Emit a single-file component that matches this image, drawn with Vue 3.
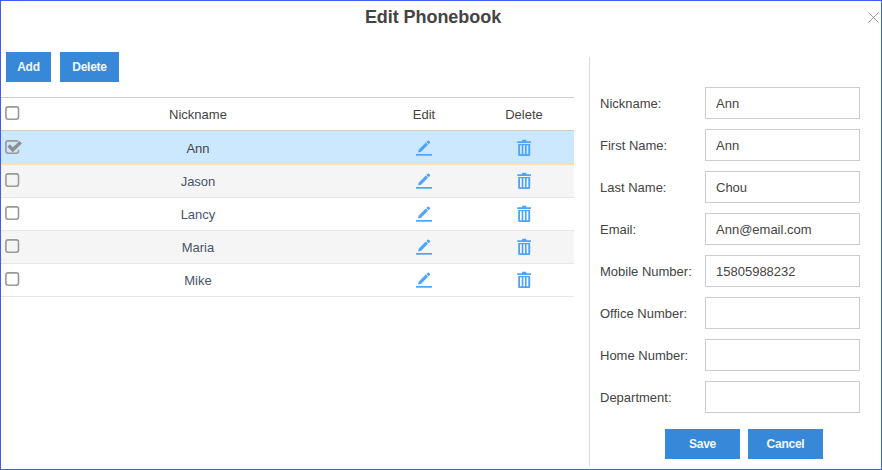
<script setup>
import { ref } from 'vue'

const contacts = ref([
  { name: 'Ann', checked: true },
  { name: 'Jason', checked: false },
  { name: 'Lancy', checked: false },
  { name: 'Maria', checked: false },
  { name: 'Mike', checked: false },
])

const fields = ref([
  { label: 'Nickname:', value: 'Ann' },
  { label: 'First Name:', value: 'Ann' },
  { label: 'Last Name:', value: 'Chou' },
  { label: 'Email:', value: 'Ann@email.com' },
  { label: 'Mobile Number:', value: '15805988232' },
  { label: 'Office Number:', value: '' },
  { label: 'Home Number:', value: '' },
  { label: 'Department:', value: '' },
])
</script>

<template>
  <div class="dialog">
    <header class="head">
      <h1>Edit Phonebook</h1>
      <svg class="close" width="11" height="11" viewBox="0 0 11 11">
        <path d="M0.5 0.5L10.5 10.5M10.5 0.5L0.5 10.5" />
      </svg>
    </header>
    <div class="body">
      <section class="list">
        <div class="tools">
          <button class="btn add">Add</button>
          <button class="btn del">Delete</button>
        </div>
        <div class="table">
          <div class="row header">
            <span class="check">
              <svg width="18" height="16" viewBox="0 0 18 16">
                <rect class="box" x="0.9" y="1.9" width="12.6" height="12.4" rx="2.2" />
              </svg>
            </span>
            <span>Nickname</span>
            <span>Edit</span>
            <span>Delete</span>
          </div>
          <div v-for="c in contacts" :key="c.name" class="row" :class="{ selected: c.checked }">
            <span class="check">
              <svg width="18" height="16" viewBox="0 0 18 16">
                <template v-if="c.checked">
                  <path class="box" d="M13 2.2Q12.4 1.9 11.4 1.9H3.1Q0.9 1.9 0.9 4.1V12.1Q0.9 14.3 3.1 14.3H11.3Q13.5 14.3 13.5 12.1V10.8" />
                  <path class="tick" d="M3.6 6.6L7.8 10.8L15.7 3.2" />
                </template>
                <rect v-else class="box" x="0.9" y="1.9" width="12.6" height="12.4" rx="2.2" />
              </svg>
            </span>
            <span class="name">{{ c.name }}</span>
            <span>
              <svg class="icon" width="16" height="18" viewBox="0 0 16 18">
                <rect x="0" y="15" width="16" height="1.7" />
                <path d="M2 13.6L2.9 10.5L9.8 3.6L12 5.8L5.1 12.7Z" />
                <path d="M10.4 3L11.7 1.7Q12.3 1.1 12.9 1.7L13.9 2.7Q14.5 3.3 13.9 3.9L12.6 5.2Z" />
              </svg>
            </span>
            <span>
              <svg class="icon" width="14" height="18" viewBox="0 0 14 18">
                <path d="M0.3 2.3H5V1.5Q5 0.7 5.8 0.7H8.7Q9.5 0.7 9.5 1.5V2.3H14V4.1H0.3Z" />
                <path fill-rule="evenodd" d="M1.2 5H13.2V16Q13.2 17 12.2 17H2.2Q1.2 17 1.2 16ZM3 6.3V15.2H4.7V6.3ZM6.3 6.3V15.2H8V6.3ZM9.6 6.3V15.2H11.3V6.3Z" />
              </svg>
            </span>
          </div>
        </div>
      </section>
      <form class="details" @submit.prevent>
        <label v-for="f in fields" :key="f.label" class="field">
          <span>{{ f.label }}</span>
          <input v-model="f.value" type="text" />
        </label>
        <div class="actions">
          <button class="btn wide">Save</button>
          <button class="btn wide">Cancel</button>
        </div>
      </form>
    </div>
  </div>
</template>

<style>
body {
  margin: 0;
  background: #fff;
}
</style>

<style scoped>
.dialog {
  box-sizing: border-box;
  width: 882px;
  height: 470px;
  border: 1px solid #405cf5;
  background: #fff;
  color: #444;
  font: 13px/16px "Liberation Sans", Arial, sans-serif;
  overflow: hidden;
}
.head {
  display: flex;
  height: 51px;
  padding: 0 2px 0 0;
}
h1 {
  flex: 1;
  margin: 5px 0 0;
  padding-right: 3px;
  font-size: 18px;
  line-height: 22px;
  letter-spacing: -0.06px;
  text-align: center;
}
.close {
  margin-top: 11px;
  fill: none;
  stroke: #999;
  stroke-width: 1;
}
.body {
  display: flex;
}
.list {
  width: 573px;
  margin-right: 15px;
}
.tools {
  display: flex;
  gap: 9px;
  padding-left: 5px;
  height: 45px;
}
.btn {
  height: 30px;
  padding: 0;
  border: 0;
  border-radius: 0;
  background: #3788d8;
  color: #f2f7fc;
  font: bold 12px/30px "Liberation Sans", Arial, sans-serif;
  letter-spacing: -0.25px;
}
.add {
  width: 45px;
}
.del {
  width: 59px;
}
.wide {
  width: 75px;
}
.row {
  box-sizing: border-box;
  display: grid;
  grid-template-columns: 21px 352px 100px 100px;
  align-items: center;
  justify-items: center;
  height: 33px;
  border-bottom: 1px solid #e6e6e6;
}
.row:nth-child(odd) {
  background: #f5f5f5;
}
.row.header {
  height: 34px;
  border-top: 1px solid #ccc;
  border-bottom-color: #ccc;
  background: #fff;
}
.row.selected {
  height: 34px;
  border-top: 1px solid #f7e3a6;
  border-bottom-color: #f7e3a6;
  background: #cce8ff;
}
.name {
  color: #475669;
}
.selected .name {
  color: #444;
}
.header > span,
.name {
  padding-top: 1px;
}
.row > .check {
  justify-self: start;
  padding: 0 0 3px 4px;
}
svg {
  display: block;
}
.box {
  fill: none;
  stroke: #999;
  stroke-width: 1.6;
}
.tick {
  fill: none;
  stroke: #8f8f8f;
  stroke-width: 3.5;
}
.icon {
  fill: #4da3ff;
}
.details {
  box-sizing: border-box;
  width: 271px;
  height: 409px;
  margin-top: 5px;
  padding: 30px 0 0 10px;
  border-left: 1px solid #ddd;
}
.field {
  display: flex;
  align-items: center;
  height: 32px;
  margin-bottom: 10px;
}
.field span {
  width: 105px;
  padding-top: 1px;
}
input {
  box-sizing: border-box;
  width: 155px;
  height: 32px;
  padding: 1px 10px 0;
  border: 1px solid #ccc;
  border-radius: 0;
  outline: none;
  background: #fff;
  color: #444;
  font: 13px "Liberation Sans", Arial, sans-serif;
}
.actions {
  display: flex;
  gap: 8px;
  padding: 6px 0 0 65px;
}
</style>
